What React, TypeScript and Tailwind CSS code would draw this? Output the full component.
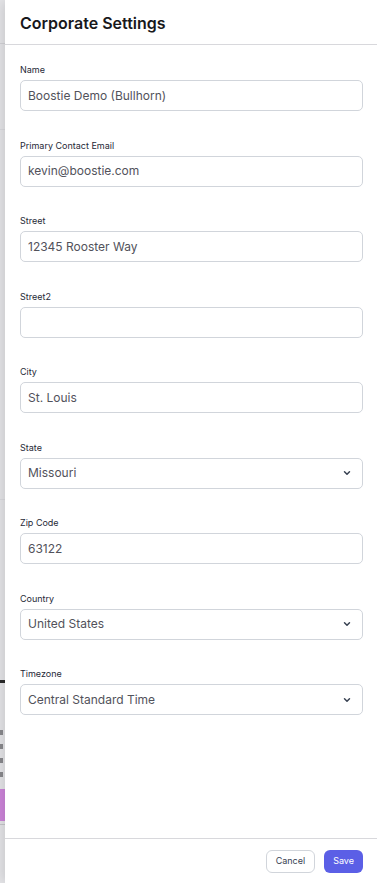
import { ChevronDown } from "lucide-react";

type Field = { label: string; value: string; select?: boolean };

const fields: Field[] = [
  { label: "Name", value: "Boostie Demo (Bullhorn)" },
  { label: "Primary Contact Email", value: "kevin@boostie.com" },
  { label: "Street", value: "12345 Rooster Way" },
  { label: "Street2", value: "" },
  { label: "City", value: "St. Louis" },
  { label: "State", value: "Missouri", select: true },
  { label: "Zip Code", value: "63122" },
  { label: "Country", value: "United States", select: true },
  { label: "Timezone", value: "Central Standard Time", select: true },
];

export default function App() {
  return (
    <div className="flex h-[883px] w-full overflow-hidden bg-white font-['Inter',sans-serif]">
      {/* page behind the drawer, dimmed */}
      <div className="flex w-[5px] shrink-0 flex-col bg-[#e7e7ea]">
        <div className="h-[44px] border-b border-[#d4d4d8]" />
        <div className="h-[86px] border-b border-[#dcdce0]" />
        <div className="h-[370px] border-b border-[#dcdce0]" />
        <div className="h-[180px]" />
        <div className="h-[3px] bg-[#2a2a2a]" />
        <div className="h-[45px]" />
        <div className="flex flex-col gap-[9px] pt-[2px]">
          <div className="h-[5px] w-[3px] bg-[#8a8a8e]" />
          <div className="h-[5px] w-[3px] bg-[#8a8a8e]" />
          <div className="h-[5px] w-[3px] bg-[#8a8a8e]" />
          <div className="h-[5px] w-[3px] bg-[#8a8a8e]" />
        </div>
        <div className="mt-[12px] h-[32px] bg-[#cf86dc]" />
        <div className="h-[3px]" />
        <div className="h-[1px] bg-[#c8c8cc]" />
      </div>

      <div className="relative flex flex-1 flex-col bg-white shadow-[-4px_0_12px_rgba(0,0,0,0.12)]">
        <header className="flex h-[45px] shrink-0 items-center border-b border-[#d8d8dc] px-[15px] pt-[2px]">
          <h1 className="text-[16px] font-semibold text-[#18181b]">Corporate Settings</h1>
        </header>

        <div className="flex flex-col gap-[28.5px] px-[15px] pr-[14px] pt-[19px]">
          {fields.map((f) => (
            <div key={f.label} className="flex flex-col gap-[4px]">
              <label className="text-[9px] leading-[12px] font-normal text-[#1f2937]">
                {f.label}
              </label>
              <div className="flex h-[31px] items-center justify-between rounded-[5px] border border-[#d1d5db] bg-white px-[7px] text-[12px] text-[#52525b]">
                <span>{f.value}</span>
                {f.select && (
                  <ChevronDown className="mr-[3px] h-[10px] w-[10px] text-[#374151]" strokeWidth={3.5} />
                )}
              </div>
            </div>
          ))}
        </div>

        <footer className="mt-auto flex h-[45px] shrink-0 items-center justify-end gap-[9px] border-t border-[#d8d8dc] pr-[14px]">
          <button
            type="button"
            className="h-[23px] rounded-[6px] border border-[#d1d5db] bg-white px-[9px] text-[9px] font-normal text-[#374151]"
          >
            Cancel
          </button>
          <button
            type="button"
            className="h-[23px] rounded-[6px] bg-[#5b5fe6] px-[9px] text-[9px] font-normal text-white"
          >
            Save
          </button>
        </footer>
      </div>
    </div>
  );
}
